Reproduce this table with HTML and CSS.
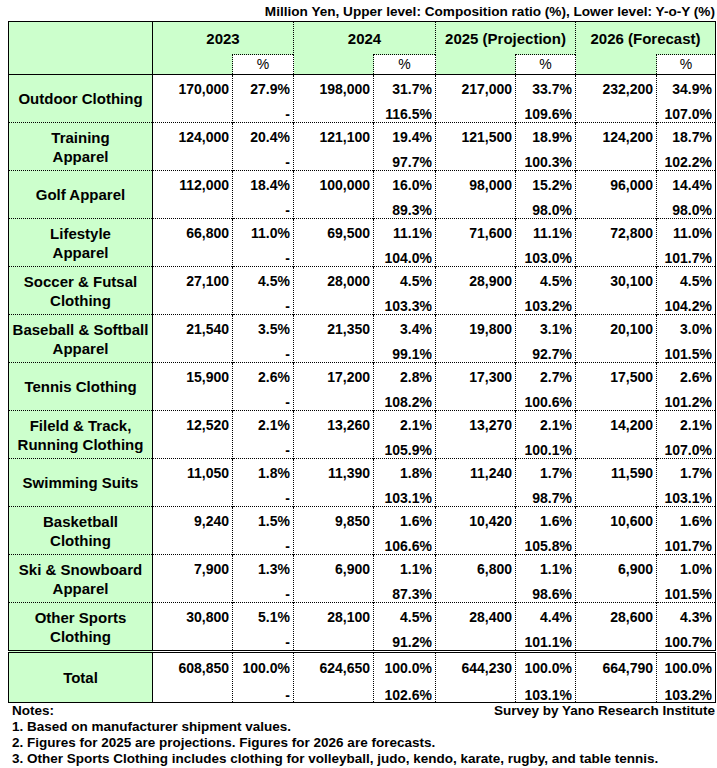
FILE: index.html
```html
<!DOCTYPE html>
<html>
<head>
<meta charset="utf-8">
<link rel="stylesheet" href="styles.css">
</head>
<body>
<div class="page">
  <div class="caption">Million Yen, Upper level: Composition ratio (%), Lower level: Y-o-Y (%)</div>
  <table class="data">
    <colgroup>
      <col class="c-label"><col class="c-val"><col class="c-pct1"><col class="c-val"><col class="c-pct2"><col class="c-val"><col class="c-pct3"><col class="c-val4"><col class="c-pct4">
    </colgroup>
    <thead>
      <tr class="h1">
        <th class="lab" rowspan="2"></th>
        <th colspan="2" class="yr">2023</th>
        <th colspan="2" class="yr">2024</th>
        <th colspan="2" class="yr">2025 (Projection)</th>
        <th colspan="2" class="yr">2026 (Forecast)</th>
      </tr>
      <tr class="h2">
        <th class="blank"></th><th class="pcth">%</th>
        <th class="blank"></th><th class="pcth">%</th>
        <th class="blank"></th><th class="pcth">%</th>
        <th class="blank"></th><th class="pcth">%</th>
      </tr>
    </thead>
    <tbody>
      <tr>
        <td class="lab">Outdoor Clothing</td>
        <td class="v">170,000</td><td class="p"><div>27.9%</div><div>-</div></td>
        <td class="v">198,000</td><td class="p"><div>31.7%</div><div>116.5%</div></td>
        <td class="v">217,000</td><td class="p"><div>33.7%</div><div>109.6%</div></td>
        <td class="v">232,200</td><td class="p"><div>34.9%</div><div>107.0%</div></td>
      </tr>
      <tr>
        <td class="lab">Training<br>Apparel</td>
        <td class="v">124,000</td><td class="p"><div>20.4%</div><div>-</div></td>
        <td class="v">121,100</td><td class="p"><div>19.4%</div><div>97.7%</div></td>
        <td class="v">121,500</td><td class="p"><div>18.9%</div><div>100.3%</div></td>
        <td class="v">124,200</td><td class="p"><div>18.7%</div><div>102.2%</div></td>
      </tr>
      <tr>
        <td class="lab">Golf Apparel</td>
        <td class="v">112,000</td><td class="p"><div>18.4%</div><div>-</div></td>
        <td class="v">100,000</td><td class="p"><div>16.0%</div><div>89.3%</div></td>
        <td class="v">98,000</td><td class="p"><div>15.2%</div><div>98.0%</div></td>
        <td class="v">96,000</td><td class="p"><div>14.4%</div><div>98.0%</div></td>
      </tr>
      <tr>
        <td class="lab">Lifestyle<br>Apparel</td>
        <td class="v">66,800</td><td class="p"><div>11.0%</div><div>-</div></td>
        <td class="v">69,500</td><td class="p"><div>11.1%</div><div>104.0%</div></td>
        <td class="v">71,600</td><td class="p"><div>11.1%</div><div>103.0%</div></td>
        <td class="v">72,800</td><td class="p"><div>11.0%</div><div>101.7%</div></td>
      </tr>
      <tr>
        <td class="lab">Soccer &amp; Futsal<br>Clothing</td>
        <td class="v">27,100</td><td class="p"><div>4.5%</div><div>-</div></td>
        <td class="v">28,000</td><td class="p"><div>4.5%</div><div>103.3%</div></td>
        <td class="v">28,900</td><td class="p"><div>4.5%</div><div>103.2%</div></td>
        <td class="v">30,100</td><td class="p"><div>4.5%</div><div>104.2%</div></td>
      </tr>
      <tr>
        <td class="lab">Baseball &amp; Softball<br>Apparel</td>
        <td class="v">21,540</td><td class="p"><div>3.5%</div><div>-</div></td>
        <td class="v">21,350</td><td class="p"><div>3.4%</div><div>99.1%</div></td>
        <td class="v">19,800</td><td class="p"><div>3.1%</div><div>92.7%</div></td>
        <td class="v">20,100</td><td class="p"><div>3.0%</div><div>101.5%</div></td>
      </tr>
      <tr>
        <td class="lab">Tennis Clothing</td>
        <td class="v">15,900</td><td class="p"><div>2.6%</div><div>-</div></td>
        <td class="v">17,200</td><td class="p"><div>2.8%</div><div>108.2%</div></td>
        <td class="v">17,300</td><td class="p"><div>2.7%</div><div>100.6%</div></td>
        <td class="v">17,500</td><td class="p"><div>2.6%</div><div>101.2%</div></td>
      </tr>
      <tr>
        <td class="lab">Fileld &amp; Track,<br>Running Clothing</td>
        <td class="v">12,520</td><td class="p"><div>2.1%</div><div>-</div></td>
        <td class="v">13,260</td><td class="p"><div>2.1%</div><div>105.9%</div></td>
        <td class="v">13,270</td><td class="p"><div>2.1%</div><div>100.1%</div></td>
        <td class="v">14,200</td><td class="p"><div>2.1%</div><div>107.0%</div></td>
      </tr>
      <tr>
        <td class="lab">Swimming Suits</td>
        <td class="v">11,050</td><td class="p"><div>1.8%</div><div>-</div></td>
        <td class="v">11,390</td><td class="p"><div>1.8%</div><div>103.1%</div></td>
        <td class="v">11,240</td><td class="p"><div>1.7%</div><div>98.7%</div></td>
        <td class="v">11,590</td><td class="p"><div>1.7%</div><div>103.1%</div></td>
      </tr>
      <tr>
        <td class="lab">Basketball<br>Clothing</td>
        <td class="v">9,240</td><td class="p"><div>1.5%</div><div>-</div></td>
        <td class="v">9,850</td><td class="p"><div>1.6%</div><div>106.6%</div></td>
        <td class="v">10,420</td><td class="p"><div>1.6%</div><div>105.8%</div></td>
        <td class="v">10,600</td><td class="p"><div>1.6%</div><div>101.7%</div></td>
      </tr>
      <tr>
        <td class="lab">Ski &amp; Snowboard<br>Apparel</td>
        <td class="v">7,900</td><td class="p"><div>1.3%</div><div>-</div></td>
        <td class="v">6,900</td><td class="p"><div>1.1%</div><div>87.3%</div></td>
        <td class="v">6,800</td><td class="p"><div>1.1%</div><div>98.6%</div></td>
        <td class="v">6,900</td><td class="p"><div>1.0%</div><div>101.5%</div></td>
      </tr>
      <tr>
        <td class="lab">Other Sports<br>Clothing</td>
        <td class="v">30,800</td><td class="p"><div>5.1%</div><div>-</div></td>
        <td class="v">28,100</td><td class="p"><div>4.5%</div><div>91.2%</div></td>
        <td class="v">28,400</td><td class="p"><div>4.4%</div><div>101.1%</div></td>
        <td class="v">28,600</td><td class="p"><div>4.3%</div><div>100.7%</div></td>
      </tr>
      <tr class="total">
        <td class="lab">Total</td>
        <td class="v">608,850</td><td class="p"><div>100.0%</div><div>-</div></td>
        <td class="v">624,650</td><td class="p"><div>100.0%</div><div>102.6%</div></td>
        <td class="v">644,230</td><td class="p"><div>100.0%</div><div>103.1%</div></td>
        <td class="v">664,790</td><td class="p"><div>100.0%</div><div>103.2%</div></td>
      </tr>
    </tbody>
  </table>
  <div class="notes">
    <div class="notes-head"><span>Notes:</span><span>Survey by Yano Research Institute</span></div>
    <div>1. Based on manufacturer shipment values.</div>
    <div>2. Figures for 2025 are projections. Figures for 2026 are forecasts.</div>
    <div>3. Other Sports Clothing includes clothing for volleyball, judo, kendo, karate, rugby, and table tennis.</div>
  </div>
</div>
</body>
</html>
```
FILE: styles.css
```css
html, body {
  margin: 0;
  padding: 0;
  background: #ffffff;
}
body {
  font-family: "Liberation Sans", Arial, sans-serif;
  font-weight: bold;
  color: #000000;
}
.page {
  width: 707px;
  padding-left: 8px;
}
.caption {
  font-size: 13.6px;
  line-height: 16px;
  height: 21px;
  padding-top: 4px;
  box-sizing: border-box;
  text-align: right;
  white-space: nowrap;
}
.data {
  border-collapse: collapse;
  table-layout: fixed;
  width: 707px;
  border: 1px solid #000;
}
.c-label { width: 144px; }
.c-val { width: 80px; }
.c-val4 { width: 81px; }
.c-pct1 { width: 61px; }
.c-pct2 { width: 62px; }
.c-pct3 { width: 60px; }
.c-pct4 { width: 59px; }
.data th, .data td {
  padding: 0;
}
.data th {
  background: #ccffcc;
  font-size: 15px;
  font-weight: bold;
}
.h1 th {
  height: 32px;
}
.h1 th.yr {
  border-left: 1px dotted #000;
  text-align: center;
  vertical-align: middle;
}
.h2 th {
  height: 19px;
}
.h2 th.pcth {
  background: #ffffff;
  border-top: 1px dotted #000;
  border-left: 1px dotted #000;
  font-size: 14px;
  font-weight: normal;
  text-align: center;
  line-height: 19px;
}
.h2 th.blank {
  border-left: 1px dotted #000;
}
.data th.lab {
  border-right: 1px solid #000;
}
thead tr.h2 th {
  border-bottom: 1px solid #000;
}
.data td {
  height: 47px;
  border-top: 1px dotted #000;
  border-left: 1px dotted #000;
  font-size: 14px;
  vertical-align: top;
  text-align: right;
}
tbody tr:first-child td {
  border-top: 1px solid #000;
}
.data td.lab {
  background: #ccffcc;
  font-size: 15px;
  line-height: 19px;
  text-align: center;
  vertical-align: middle;
  border-left: 1px solid #000;
  border-right: 1px solid #000;
}
.data td.v, .data td.p {
  padding: 0 3px 0 0;
  line-height: 14px;
}
.data td.v {
  padding-top: 7px;
  height: 40px;
}
.data td.p div:first-child {
  margin-top: 7px;
}
.data td.p div + div {
  margin-top: 11px;
}
.data tr.total td {
  border-top: 3px double #000;
  height: 48px;
}
.data tr.total td.v {
  padding-top: 8px;
  height: 40px;
}
.data tr.total td.p div:first-child {
  margin-top: 8px;
}
.data tr.total td.p div + div {
  margin-top: 13px;
}
.notes {
  font-size: 13.5px;
  line-height: 16px;
  padding-left: 4px;
}
.notes-head {
  display: flex;
  justify-content: space-between;
}
```
